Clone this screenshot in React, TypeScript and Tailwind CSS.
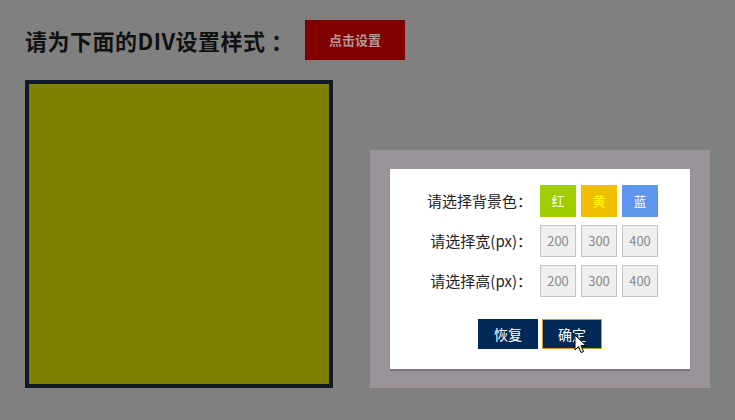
import React from 'react';

const colorBtns = [
  { label: '红', bg: 'bg-[#a0cd00]', text: 'text-white' },
  { label: '黄', bg: 'bg-[#efbf00]', text: 'text-[#ffff00]' },
  { label: '蓝', bg: 'bg-[#5e96ee]', text: 'text-white' },
];

const sizes = ['200', '300', '400'];

function Cursor() {
  return (
    <svg className="absolute left-[31px] top-[14px] w-[14px] h-[21px]" viewBox="0 0 14 21">
      <path d="M1 1 L1 16 L4.5 12.5 L7 18.5 L9.5 17.5 L7 11.5 L12 11.5 Z" fill="#fff" stroke="#000" strokeWidth="1" strokeLinejoin="round" />
    </svg>
  );
}

export default function App() {
  return (
    <div className="w-[735px] h-[420px] bg-[#808080] overflow-hidden font-['Noto_Sans_CJK_SC','Liberation_Sans',sans-serif]">
      {/* heading */}
      <div className="flex items-center pt-[20px] pl-[25px]">
        <h1 className="w-[280px] text-[22px] font-bold text-[#111] leading-none tracking-[0.5px]">请为下面的DIV设置样式 ：</h1>
        <button className="w-[100px] h-[40px] bg-[#800000] text-[#b49a9a] text-[13px] font-bold">点击设置</button>
      </div>

      <div className="flex items-start mt-[20px] pl-[25px]">
        {/* target box */}
        <div className="w-[308px] h-[308px] border-4 border-[#101a25] bg-[#808000]" />

        {/* settings panel */}
        <div className="ml-[37px] mt-[70px] w-[340px] h-[238px] bg-[#9a9399] pt-[19px] pl-[20px]">
          <div className="w-[300px] h-[200px] bg-white shadow-[0_2px_1px_rgba(80,75,85,0.35)] pt-[16px]">
            <div className="grid grid-cols-[142px_auto] gap-x-[8px] gap-y-[8px] items-center">
              <span className="text-right text-[15px] text-[#222]">请选择背景色：</span>
              <div className="flex gap-[5px]">
                {colorBtns.map((b) => (
                  <button key={b.label} className={`w-[36px] h-[32px] text-[13px] ${b.bg} ${b.text}`}>
                    {b.label}
                  </button>
                ))}
              </div>
              <span className="text-right text-[15px] text-[#222]">请选择宽(px)：</span>
              <div className="flex gap-[5px]">
                {sizes.map((s) => (
                  <button key={s} className="w-[36px] h-[32px] bg-[#efefef] border border-[#c4c4c4] text-[13px] text-[#8a8a8a]">
                    {s}
                  </button>
                ))}
              </div>
              <span className="text-right text-[15px] text-[#222]">请选择高(px)：</span>
              <div className="flex gap-[5px]">
                {sizes.map((s) => (
                  <button key={s} className="w-[36px] h-[32px] bg-[#efefef] border border-[#c4c4c4] text-[13px] text-[#8a8a8a]">
                    {s}
                  </button>
                ))}
              </div>
            </div>

            <div className="flex justify-center gap-[4px] mt-[22px]">
              <button className="w-[60px] h-[30px] bg-[#002a55] text-white text-[14px]">恢复</button>
              <button className="relative w-[60px] h-[30px] bg-[#002a55] border border-[#d09a3c] text-white text-[14px]">
                确定
                <Cursor />
              </button>
            </div>
          </div>
        </div>
      </div>
    </div>
  );
}
